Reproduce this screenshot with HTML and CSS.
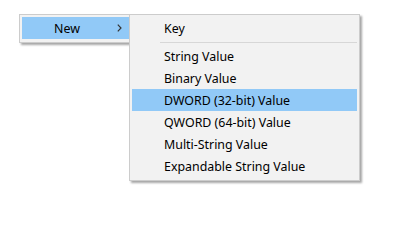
FILE: index.html
```html
<!DOCTYPE html>
<html>
<head>
<meta charset="utf-8">
<link rel="stylesheet" href="styles.css">
</head>
<body>
<div class="stage">
  <div class="menu menu-main">
    <div class="item active">
      <span class="label">New</span>
      <svg class="chev" width="5" height="8" viewBox="0 0 5 8"><path d="M0.8 0.6 L4 4 L0.8 7.4" fill="none" stroke="#333" stroke-width="1.2"/></svg>
    </div>
  </div>
  <div class="menu menu-sub">
    <div class="item"><span class="label">Key</span></div>
    <div class="sep"></div>
    <div class="item"><span class="label">String Value</span></div>
    <div class="item"><span class="label">Binary Value</span></div>
    <div class="item active"><span class="label">DWORD (32-bit) Value</span></div>
    <div class="item"><span class="label">QWORD (64-bit) Value</span></div>
    <div class="item"><span class="label">Multi-String Value</span></div>
    <div class="item"><span class="label">Expandable String Value</span></div>
  </div>
</div>
</body>
</html>
```
FILE: styles.css
```css
html, body {
  margin: 0;
  padding: 0;
  background: #ffffff;
}
.stage {
  position: relative;
  width: 410px;
  height: 216px;
  font-family: "Noto Sans", "Open Sans", sans-serif;
  font-size: 12.4px;
  color: #000;
}
.menu {
  position: absolute;
  box-sizing: border-box;
  background: #f2f2f2;
  border: 1px solid #cccccc;
  padding: 2px 2px 3px;
  box-shadow: 2px 2px 2px rgba(0, 0, 0, 0.35);
}
.menu-main {
  left: 19px;
  top: 14px;
  width: 116px;
}
.menu-sub {
  left: 129px;
  top: 14px;
  width: 231px;
}
.item {
  display: flex;
  align-items: center;
  height: 22px;
  padding-left: 32px;
  padding-right: 10px;
  white-space: nowrap;
}
.item.active {
  background: #91c9f7;
}
.label {
  line-height: 22px;
  position: relative;
  top: 1px;
}
.chev {
  margin-left: auto;
  display: block;
}
.sep {
  height: 1px;
  background: #d7d7d7;
  margin: 3px 0 2px 28px;
}
```
